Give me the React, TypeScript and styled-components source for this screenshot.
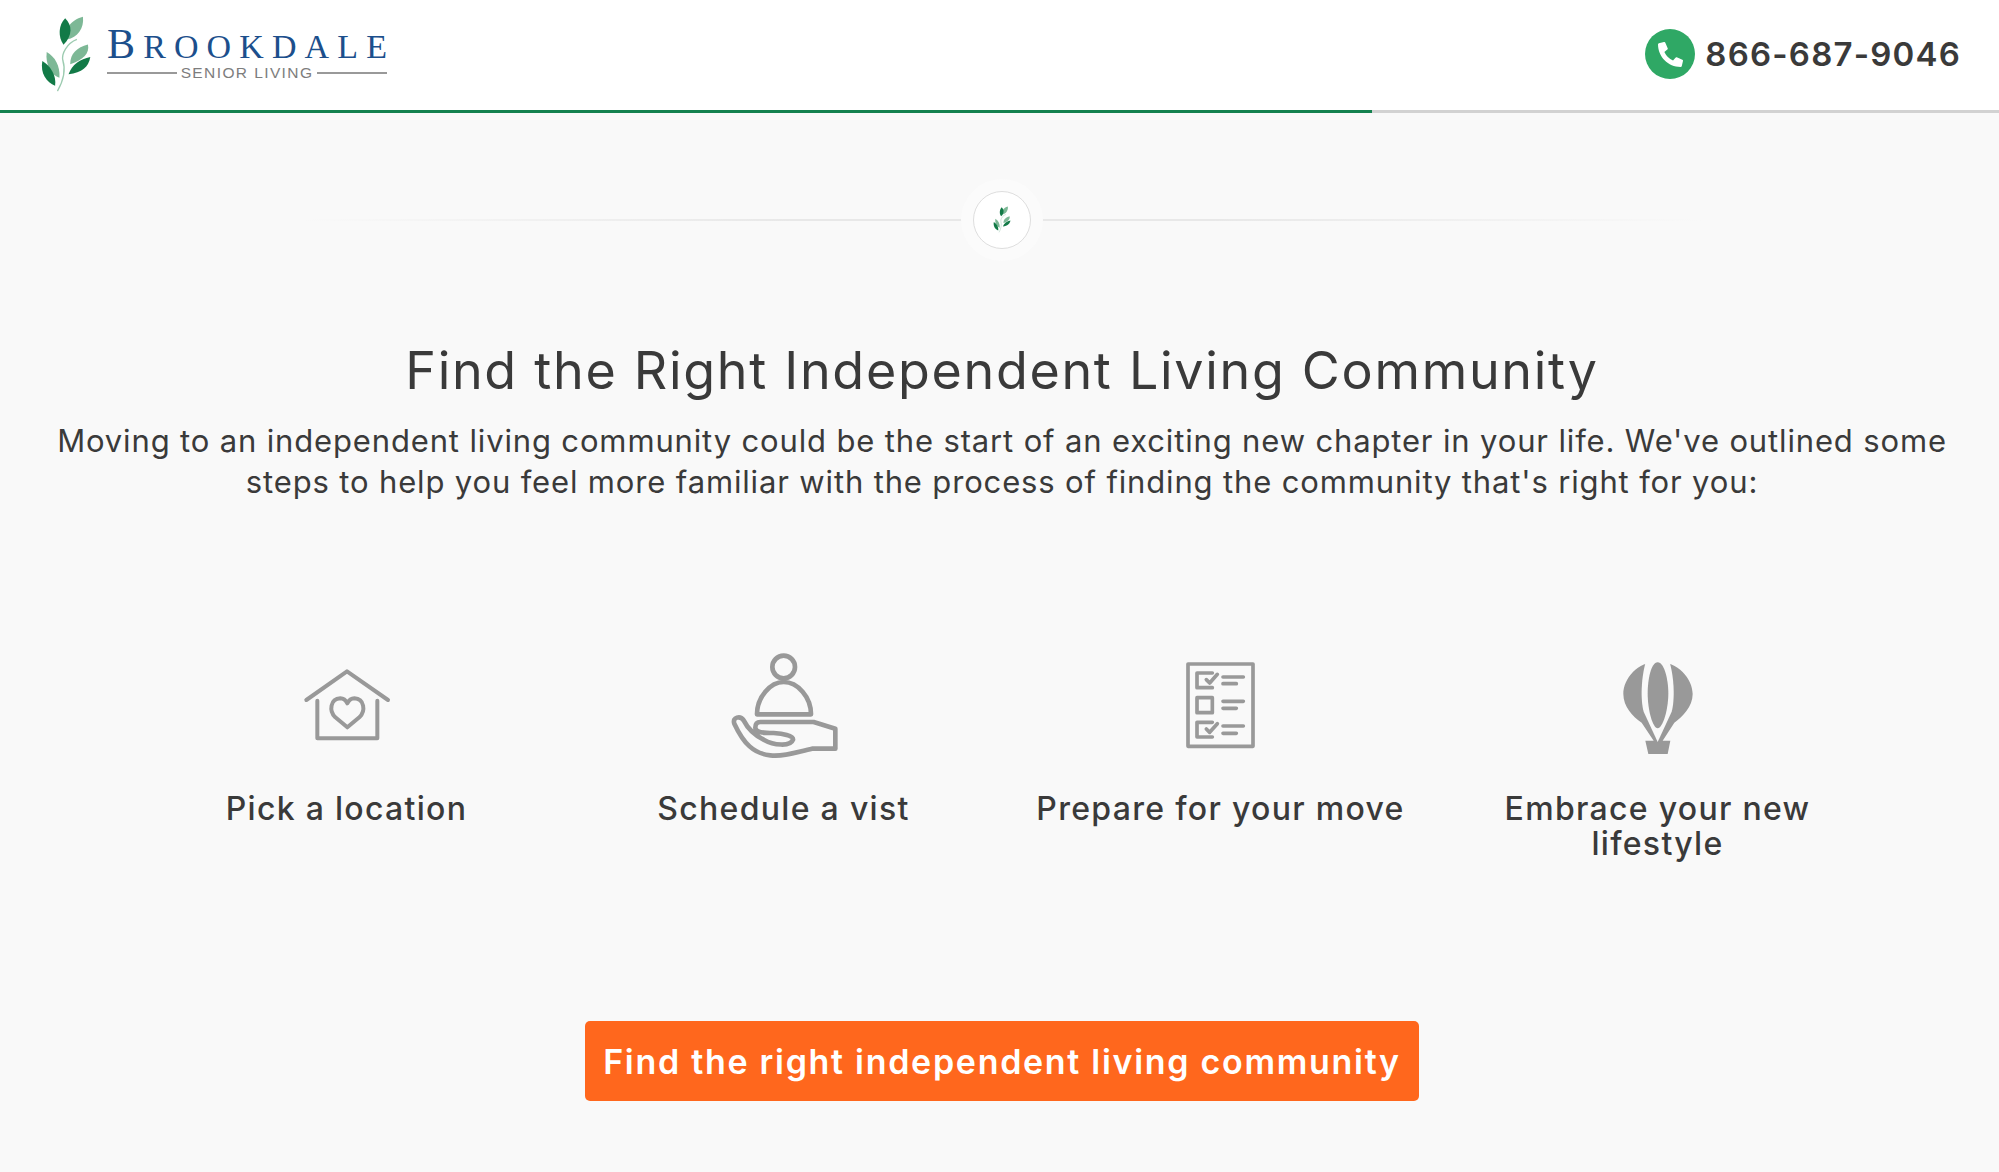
import React from "react";
import styled, { createGlobalStyle } from "styled-components";
import { FaPhoneAlt } from "react-icons/fa";

const GlobalStyle = createGlobalStyle`
  html, body {
    margin: 0;
    padding: 0;
    background-color: #f9f9f9;
    font-family: "Inter", "Open Sans", sans-serif;
    color: #3a3a3a;
  }
`;

const Page = styled.div`
  width: 1999px;
  height: 1172px;
  overflow: hidden;
  background-color: #f9f9f9;
`;

const Header = styled.header`
  display: flex;
  justify-content: space-between;
  align-items: center;
  height: 110px;
  padding: 0 38px 2px 40px;
  box-sizing: border-box;
  background-color: #fff;
`;

const Logo = styled.div`
  display: flex;
  align-items: flex-start;
  gap: 15px;
`;

const LogoText = styled.div`
  display: flex;
  flex-direction: column;
  width: 280px;
  padding-top: 11px;
`;

const LogoName = styled.div`
  display: flex;
  justify-content: space-between;
  align-items: baseline;
  font-family: "Liberation Serif", serif;
  font-size: 34px;
  line-height: 36px;
  color: #1c4f8c;
`;

const LogoInitial = styled.span`
  font-size: 42px;
`;

const LogoSub = styled.div`
  display: flex;
  align-items: center;
  gap: 4px;
  margin-top: 1px;
  font-family: "Liberation Sans", sans-serif;
  font-size: 15.5px;
  line-height: 14px;
  letter-spacing: 1.4px;
  color: #7d7d7d;

  &::before,
  &::after {
    content: "";
    flex: 1;
    height: 2px;
    background-color: #999;
  }
`;

const Phone = styled.div`
  display: flex;
  align-items: center;
  gap: 10px;
  font-size: 33px;
  font-weight: 600;
  letter-spacing: 1.2px;
  color: #3a3a3a;
`;

const PhoneBadge = styled.span`
  display: flex;
  justify-content: center;
  align-items: center;
  width: 50px;
  height: 50px;
  border-radius: 50%;
  background-color: #2fa865;
  color: #fff;
`;

const ProgressTrack = styled.div`
  height: 3px;
  background-color: #d2d2d2;
`;

const ProgressFill = styled.div`
  height: 100%;
  background-color: #14814f;
`;

const Main = styled.main`
  display: flex;
  flex-direction: column;
  align-items: center;
  padding-left: 5px;
`;

const Divider = styled.div`
  display: flex;
  justify-content: center;
  align-items: center;
  width: 1400px;
  margin-top: 78px;
  background: linear-gradient(
      to right,
      rgba(232, 232, 232, 0),
      #e8e8e8 35%,
      #e8e8e8 65%,
      rgba(232, 232, 232, 0)
    )
    center / 100% 2px no-repeat;
`;

const Seal = styled.div`
  display: flex;
  justify-content: center;
  align-items: center;
  width: 56px;
  height: 56px;
  border: 1px solid #dedede;
  border-radius: 50%;
  background-color: #fff;
  box-shadow: 0 0 0 12px #fbfbfb;
`;

const Title = styled.h1`
  margin: 92px 0 0;
  font-size: 52px;
  line-height: 60px;
  font-weight: 400;
  letter-spacing: 1.7px;
  color: #3a3a3a;
`;

const Intro = styled.p`
  width: 1920px;
  margin: 19px 0 0;
  font-size: 31px;
  line-height: 41px;
  font-weight: 400;
  letter-spacing: 0.85px;
  text-align: center;
  color: #3a3a3a;
`;

const Steps = styled.div`
  display: grid;
  grid-template-columns: repeat(4, 437px);
  margin-top: 141px;
`;

const Step = styled.div`
  display: flex;
  flex-direction: column;
  align-items: center;
  padding: 0 30px;
`;

const IconSlot = styled.div`
  display: flex;
  justify-content: center;
  align-items: center;
  height: 112px;
`;

const StepLabel = styled.div`
  margin-top: 36px;
  font-size: 32px;
  line-height: 35px;
  font-weight: 500;
  letter-spacing: 1.3px;
  text-align: center;
  color: #3a3a3a;
`;

const Cta = styled.button`
  width: 834px;
  height: 80px;
  margin-top: 160px;
  padding: 0;
  border: 0;
  border-radius: 5px;
  background-color: #ff671d;
  font-family: inherit;
  font-size: 34px;
  font-weight: 600;
  letter-spacing: 1.7px;
  color: #fff;
  cursor: pointer;
`;

function Sprig({ width }: { width: number }) {
  return (
    <svg width={width} viewBox="60 45 155 235" style={{ display: "block" }}>
      <path
        d="M112 272C130 240 136 205 128 180C124 160 140 130 170 118"
        fill="none"
        stroke="#9ccbb0"
        strokeWidth="4"
      />
      <path d="M140 118C130 90 150 60 188 50C192 85 172 112 140 118Z" fill="#7db896" />
      <path d="M130 134C113 110 115 75 135 55C156 75 158 106 130 134Z" fill="#127a47" />
      <path d="M150 192C150 160 170 142 203 133C208 160 190 178 150 192Z" fill="#7db896" />
      <path d="M145 222C155 192 180 176 210 170C205 200 185 216 145 222Z" fill="#127a47" />
      <path d="M80 155C105 170 120 195 118 232C95 225 75 195 80 155Z" fill="#7db896" />
      <path d="M105 256C80 245 60 220 67 182C90 195 110 225 105 256Z" fill="#127a47" />
    </svg>
  );
}

const iconStroke = {
  fill: "none",
  stroke: "#999",
  strokeLinecap: "round",
  strokeLinejoin: "round",
} as const;

function HouseIcon() {
  return (
    <svg width="140" height="120" viewBox="-10 0 420 360" {...iconStroke} strokeWidth="12">
      <path d="M78 183L200 97L323 183" />
      <path d="M111 185V298H291V185" />
      <path d="M201 265L165 235C145 215 150 180 180 178C190 178 197 185 201 193C205 185 212 178 222 178C252 180 257 215 237 235Z" />
    </svg>
  );
}

function HandIcon() {
  return (
    <svg width="140" height="120" viewBox="11 -4 420 360" {...iconStroke} strokeWidth="14">
      <circle cx="220" cy="80" r="34" />
      <path d="M140 222C140 170 180 125 220 125C262 125 302 170 302 222Z" />
      <path d="M150 245H310L375 265V325L305 325C260 335 220 350 180 345C130 340 100 310 72 250C65 230 90 225 100 240C110 260 125 280 160 298C190 315 240 320 248 298C250 285 215 280 190 278C160 278 135 278 135 262C135 250 140 245 150 245Z" />
    </svg>
  );
}

function ChecklistIcon() {
  return (
    <svg width="140" height="110" viewBox="4 -15 420 330" {...iconStroke} strokeWidth="11">
      <rect x="115" y="45" width="195" height="247" />
      <path d="M188 116H142V72H188" />
      <path d="M170 92L180 102L203 76" />
      <rect x="142" y="146" width="46" height="45" />
      <path d="M188 264H142V220H188" />
      <path d="M170 240L180 250L203 224" />
      <path d="M220 84H281M220 104H260M220 157H281M220 178H260M220 231H281M220 253H260" />
    </svg>
  );
}

function BalloonIcon() {
  return (
    <svg width="130" height="110" viewBox="6 -18 390 330">
      <path
        d="M200 35C260 35 305 85 305 132C305 170 275 200 250 218L215 272H238L230 312H172L163 272H188L152 218C125 200 97 170 97 132C97 85 140 35 200 35Z"
        fill="#999"
      />
      <path
        d="M166 30C150 80 148 150 158 185L200 276L242 185C252 150 250 80 234 30Z"
        fill="#f9f9f9"
      />
      <path
        d="M200 37C220 37 232 90 232 130C232 180 215 235 200 235C185 235 170 180 170 130C170 90 180 37 200 37Z"
        fill="#999"
      />
    </svg>
  );
}

const steps = [
  { label: "Pick a location", icon: <HouseIcon /> },
  { label: "Schedule a vist", icon: <HandIcon /> },
  { label: "Prepare for your move", icon: <ChecklistIcon /> },
  { label: "Embrace your new lifestyle", icon: <BalloonIcon /> },
];

export default function App() {
  return (
    <Page>
      <GlobalStyle />
      <Header>
        <Logo>
          <Sprig width={52} />
          <LogoText>
            <LogoName>
              <LogoInitial>B</LogoInitial>
              <span>R</span>
              <span>O</span>
              <span>O</span>
              <span>K</span>
              <span>D</span>
              <span>A</span>
              <span>L</span>
              <span>E</span>
            </LogoName>
            <LogoSub>SENIOR LIVING</LogoSub>
          </LogoText>
        </Logo>
        <Phone>
          <PhoneBadge>
            <FaPhoneAlt size={25} />
          </PhoneBadge>
          866-687-9046
        </Phone>
      </Header>
      <ProgressTrack>
        <ProgressFill style={{ width: "68.65%" }} />
      </ProgressTrack>
      <Main>
        <Divider>
          <Seal>
            <Sprig width={18} />
          </Seal>
        </Divider>
        <Title>Find the Right Independent Living Community</Title>
        <Intro>
          Moving to an independent living community could be the start of an exciting new chapter in
          your life. We've outlined some steps to help you feel more familiar with the process of
          finding the community that's right for you:
        </Intro>
        <Steps>
          {steps.map((step) => (
            <Step key={step.label}>
              <IconSlot>{step.icon}</IconSlot>
              <StepLabel>{step.label}</StepLabel>
            </Step>
          ))}
        </Steps>
        <Cta>Find the right independent living community</Cta>
      </Main>
    </Page>
  );
}
